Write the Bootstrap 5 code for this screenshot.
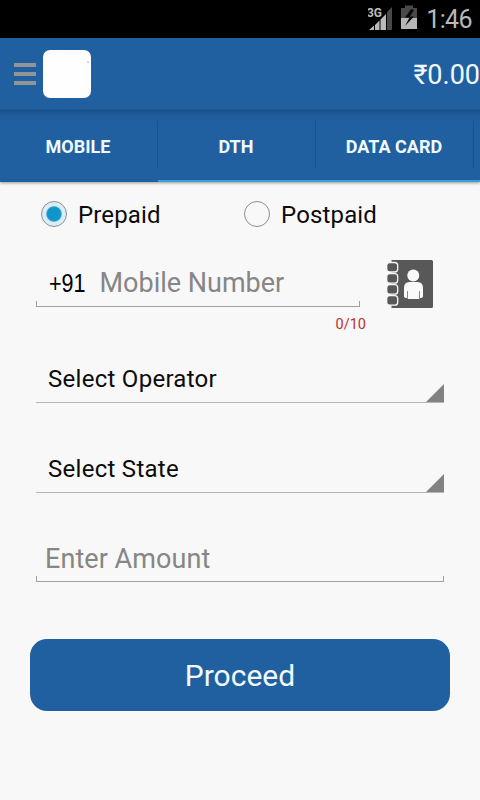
<!DOCTYPE html>
<html lang="en">
<head>
<meta charset="utf-8">
<meta name="viewport" content="width=device-width, initial-scale=1">
<title>Recharge</title>
<link href="https://cdn.jsdelivr.net/npm/bootstrap@5.3.0/dist/css/bootstrap.min.css" rel="stylesheet">
<style>
body{font-family:Roboto,sans-serif;background:#f8f8f8;color:#0c0c0c;width:480px;height:800px;overflow:hidden;line-height:1}
.status{height:38px;background:#000;color:#b8b8b8;padding-right:8px}
.clock{font-size:25px;line-height:38px;letter-spacing:-.6px;padding-top:2px}
.topbar{height:72px;background:#2160a0;padding-left:14px}
.logo{width:48px;height:48px;border-radius:7px;background:#fefefe;margin-left:7px}
.balance{font-size:27px;color:#f2faff;letter-spacing:0;padding-top:2px}
.tabs{height:72px;background:linear-gradient(#17508a,#1c5896 3px,#2160a0 8px);box-shadow:0 1px 3px rgba(0,0,0,.4);overflow:hidden}
.tabs .tab{flex:0 0 158px;height:72px;border:0;border-bottom:2px solid #2160a0;border-radius:0;color:#eefaff;font-weight:700;font-size:18px;padding:3px 2px 0 0;background:linear-gradient(#1b538c,#1b538c) right 11px/1px 48px no-repeat}
.tabs .lit{border-bottom-color:#3c9fdc}
.radios{height:64px;padding-left:41px}
.choice{font-size:24px;letter-spacing:.15px;width:203px}
.choice span{padding-top:2px}
.dot{appearance:none;width:26px;height:26px;border:1.5px solid #8e8e8e;border-radius:50%;margin:0 11px 0 0;background:#f8f8f8}
.dot:checked{background:radial-gradient(circle,#0e95ca 0 6px,#3a9dc6 7.2px,#d6edf7 8.2px,#d9f0fa 12px)}
.line{border:0;background:linear-gradient(#a0a0a0,#a0a0a0) left bottom/1px 6px no-repeat,linear-gradient(#a0a0a0,#a0a0a0) right bottom/1px 6px no-repeat,linear-gradient(#a0a0a0,#a0a0a0) bottom/100% 1px no-repeat}
.line input{border:0;background:none;outline:0;padding:0;min-width:0;font-size:27px;color:#222;line-height:1}
.line input::placeholder{color:#868686;opacity:1}
.phone{width:324px;height:49px;padding:1px 0 0 13px}
.contacts{margin-top:3px}
.prefix{font:25px "Liberation Sans",Arial,sans-serif;color:#000;width:50.5px;flex:none}
.prefix span{display:inline-block;transform:scaleX(.86);transform-origin:left}
.count{font-size:14.5px;color:#c12f2b;width:366px;height:26px;padding-top:12px;margin-top:-3px}
.form-area{padding:0 36px}
.picker{height:51px;border:0;border-bottom:1px solid #b5b5b5;border-radius:0;font-size:24px;padding:0 0 0 12px;background:none;color:#0c0c0c;width:100%;letter-spacing:.28px;margin-top:20px}
.picker span{padding-top:4px}
.picker+.picker{margin-top:39px}
.amount{height:49px;padding:3px 0 0 9px;margin-top:40px}
.amount input{letter-spacing:.06px}
.proceed,.proceed:hover{height:72px;width:420px;border:0;border-radius:17px;background:#2160a0;color:#f2faff;font-size:30px;margin-top:57px}
</style>
</head>
<body>
<div class="status d-flex justify-content-end align-items-center">
  <svg width="54" height="38" viewBox="0 0 54 38">
    <path d="M19 12 24 7V30H19Z" fill="#494949"/>
    <path d="M1 30 6 25.500V30ZM7 25 11.500 20.500V30H7ZM12.500 19.500 18 14V30H12.500Z" fill="#bbb"/>
    <text x="-1" y="17" font-size="13" font-weight="700" fill="#bbb" stroke="#000" stroke-width="2" paint-order="stroke" textLength="15" lengthAdjust="spacingAndGlyphs">3G</text>
    <path d="M33 8H37V5.500H45V8H49V19H33Z" fill="#494949"/><path d="M33 18H49V29H33Z" fill="#b6b6b6"/>
    <path d="M43 9 37 17.500H41.500L37 26 46 16.500H42L46 10Z" fill="#0a0a0a"/>
  </svg>
  <span class="clock ms-1">1:46</span>
</div>
<header class="topbar d-flex align-items-center">
  <svg width="22" height="24" viewBox="0 0 22 24"><path d="M0 1H22V5H0ZM0 10H22V14H0ZM0 19H22V23H0Z" fill="#929596"/></svg>
  <div class="logo"><svg class="d-block" width="48" height="48"><path d="M44 12h2" stroke="#d7a69c"/></svg></div>
  <span class="balance ms-auto">₹0.00</span>
</header>
<nav class="tabs d-flex">
  <button class="tab">MOBILE</button><button class="tab lit">DTH</button><button class="tab lit">DATA CARD</button><button class="tab lit" aria-label="More"></button>
</nav>
<main>
  <div class="radios d-flex align-items-center">
    <label class="choice d-flex align-items-center"><input class="dot" type="radio" name="plan" checked><span>Prepaid</span></label>
    <label class="choice d-flex align-items-center"><input class="dot" type="radio" name="plan"><span>Postpaid</span></label>
  </div>
  <div class="form-area">
    <div class="d-flex pt-2">
      <div class="line phone d-flex align-items-center mt-1">
        <span class="prefix"><span>+91</span></span><input class="flex-grow-1" placeholder="Mobile Number">
      </div>
      <svg class="contacts ms-4" width="52" height="52" viewBox="384 257 52 52">
        <path d="M391.500 260H431.500Q433 260 433 261.500V306.500Q433 308 431.500 308H391.500Z" fill="#585858"/>
        <g fill="#585858" stroke="#f8f8f8" stroke-width="1.3"><rect x="386.700" y="262.500" width="11" height="9.500" rx="3"/><rect x="386.700" y="273.700" width="11" height="9.500" rx="3"/><rect x="386.700" y="284.700" width="11" height="9.500" rx="3"/><rect x="386.700" y="295.700" width="11" height="9.500" rx="3"/></g>
        <circle cx="413.300" cy="275.500" r="6" fill="#fafafa"/>
        <path d="M409.500 282H417.500Q423 282 423 288V296Q423 298 420 298V291H419.300V299H407.700V291H407V298Q404 298 404 296V288Q404 282 409.500 282Z" fill="#fafafa"/>
      </svg>
    </div>
  </div>
  <div class="count text-end">0/10</div>
  <div class="form-area">
    <button class="picker d-flex align-items-end justify-content-between"><span class="align-self-center">Select Operator</span><svg width="18" height="18"><path d="M18 0V18H0Z" fill="#828282"/></svg></button>
    <button class="picker d-flex align-items-end justify-content-between"><span class="align-self-center">Select State</span><svg width="18" height="18"><path d="M18 0V18H0Z" fill="#828282"/></svg></button>
    <div class="line amount d-flex align-items-center"><input class="flex-grow-1" placeholder="Enter Amount"></div>
  </div>
  <div class="text-center"><button class="proceed btn">Proceed</button></div>
</main>
<script src="https://cdn.jsdelivr.net/npm/bootstrap@5.3.0/dist/js/bootstrap.bundle.min.js"></script>
</body>
</html>
